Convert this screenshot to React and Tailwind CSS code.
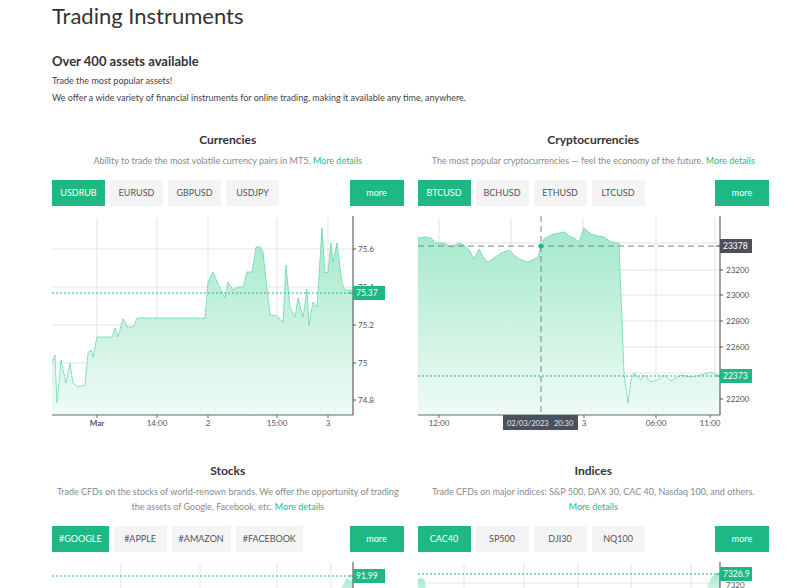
import React from 'react';

const GREEN = '#1db884';

// price series, page coords (converted to chart-local in the component)
const usdRub = [
  [52, 362], [55, 355], [57, 403], [61, 360], [66, 383], [70, 363], [73, 383], [78, 387],
  [85, 385], [88, 353], [91, 350], [93, 357], [97, 337], [112, 337], [115, 328], [118, 337],
  [123, 319], [127, 327], [133, 327], [137, 318], [205, 318], [208, 282], [213, 272],
  [220, 288], [225, 298], [228, 282], [233, 290], [238, 287], [243, 287], [247, 272],
  [252, 272], [256, 247], [260, 247], [263, 252], [270, 315], [277, 316], [283, 322],
  [286, 265], [290, 307], [295, 317], [298, 298], [303, 317], [307, 289], [309, 325],
  [313, 302], [317, 307], [322, 228], [325, 273], [328, 272], [331, 243], [333, 262],
  [337, 243], [342, 283], [345, 290], [353, 290],
];

const btcUsd = [
  [417, 238], [423, 237], [430, 238], [435, 243], [443, 243], [450, 247], [458, 243],
  [463, 245], [468, 250], [473, 259], [478, 249], [482, 257], [487, 262], [493, 258],
  [500, 253], [508, 250], [513, 255], [520, 260], [527, 262], [532, 260], [537, 257],
  [540, 246], [543, 239], [550, 235], [558, 233], [564, 232], [568, 236], [573, 238],
  [578, 242], [583, 228], [590, 234], [597, 236], [603, 237], [610, 242], [618, 243],
  [623, 373], [627, 403], [630, 380], [633, 373], [640, 380], [643, 375], [650, 382],
  [657, 380], [663, 375], [670, 381], [680, 375], [690, 377], [700, 375], [710, 372],
  [716, 375], [719, 376],
];

function toLocal(points, ox, oy) {
  return points.map(([x, y]) => [x - ox, y - oy]);
}

function linePath(points) {
  return points.map(([x, y], i) => `${i ? 'L' : 'M'}${x} ${y}`).join(' ');
}

function areaPath(points, bottom) {
  const first = points[0];
  const last = points[points.length - 1];
  return `${linePath(points)} L${last[0]} ${bottom} L${first[0]} ${bottom} Z`;
}

function Gradient({ id }) {
  return (
    <defs>
      <linearGradient id={id} x1="0" y1="0" x2="0" y2="1">
        <stop offset="0%" stopColor="#a3e9ca" />
        <stop offset="100%" stopColor="#effbf6" />
      </linearGradient>
    </defs>
  );
}

function PriceTag({ x, y, label, dark }) {
  return (
    <g>
      <line x1={x - 4} y1={y} x2={x} y2={y} stroke={dark ? '#4b505c' : GREEN} />
      <rect x={x} y={y - 7} width={32} height={14} fill={dark ? '#4b505c' : GREEN} />
      <text x={x + 3} y={y + 3} fontSize="8.5" fill="#fff">{label}</text>
    </g>
  );
}

const labelProps = { fontSize: '8', fill: '#555', fontFamily: 'Lato, sans-serif' };

function CurrencyChart() {
  const pts = toLocal(usdRub, 52, 214);
  const gx = [45, 105, 156, 225, 276];
  const gy = [[35, '75.6'], [73, '75.4'], [111, '75.2'], [149, '75'], [186, '74.8']];
  const xl = [[45, 'Mar', true], [105, '14:00'], [156, '2'], [225, '15:00'], [276, '3']];
  return (
    <svg width="351" height="220" className="block">
      <Gradient id="g1" />
      {gx.map((x) => <line key={x} x1={x} y1="4" x2={x} y2="201" stroke="#e3e3e3" />)}
      {gy.map(([y, l]) => (
        <g key={l}>
          <line x1="0" y1={y} x2="301" y2={y} stroke="#e3e3e3" />
          <line x1="301" y1={y} x2="304" y2={y} stroke="#555" />
          <text x="306" y={y + 3} {...labelProps}>{l}</text>
        </g>
      ))}
      <path d={areaPath(pts, 201)} fill="url(#g1)" />
      <path d={linePath(pts)} fill="none" stroke="#49cf98" strokeDasharray="1.2 0.8" />
      <line x1="0" y1="79" x2="301" y2="79" stroke={GREEN} strokeDasharray="2 2" />
      <line x1="301" y1="2" x2="301" y2="201" stroke="#444" />
      <line x1="0" y1="201" x2="301" y2="201" stroke="#666" />
      {xl.map(([x, l, b]) => (
        <g key={l}>
          <line x1={x} y1="201" x2={x} y2="204" stroke="#666" />
          <text x={x} y="212" textAnchor="middle" {...labelProps} fontWeight={b ? 700 : 400}>{l}</text>
        </g>
      ))}
      <PriceTag x={301} y={79} label="75.37" />
    </svg>
  );
}

function CryptoChart() {
  const pts = toLocal(btcUsd, 417, 214);
  const gx = [21, 93, 165, 238, 297];
  const gy = [29, 56, 81, 107, 133, 159, 185];
  const yl = [[56, '23200'], [81, '23000'], [107, '22800'], [133, '22600'], [185, '22200']];
  const xl = [[21, '12:00'], [166, '3'], [238, '06:00'], [292, '11:00']];
  return (
    <svg width="352" height="220" className="block">
      <Gradient id="g2" />
      {gx.map((x) => <line key={x} x1={x} y1="4" x2={x} y2="201" stroke="#e3e3e3" />)}
      {gy.map((y) => <line key={y} x1="0" y1={y} x2="302" y2={y} stroke="#e3e3e3" />)}
      {yl.map(([y, l]) => (
        <g key={l}>
          <line x1="302" y1={y} x2="305" y2={y} stroke="#555" />
          <text x="308" y={y + 3} {...labelProps}>{l}</text>
        </g>
      ))}
      <path d={areaPath(pts, 201)} fill="url(#g2)" />
      <path d={linePath(pts)} fill="none" stroke="#49cf98" strokeDasharray="1.2 0.8" />
      <line x1="0" y1="162" x2="302" y2="162" stroke={GREEN} strokeDasharray="2 2" />
      <line x1="0" y1="32" x2="302" y2="32" stroke="#7d828c" strokeDasharray="6 4" />
      <line x1="123" y1="2" x2="123" y2="201" stroke="#7d828c" strokeDasharray="6 4" />
      <circle cx="123" cy="32" r="2.5" fill={GREEN} />
      <line x1="302" y1="2" x2="302" y2="201" stroke="#444" />
      <line x1="0" y1="201" x2="302" y2="201" stroke="#666" />
      {xl.map(([x, l]) => (
        <g key={l}>
          <line x1={x} y1="201" x2={x} y2="204" stroke="#666" />
          <text x={x} y="212" textAnchor="middle" {...labelProps}>{l}</text>
        </g>
      ))}
      <rect x="85" y="201" width="75" height="15" fill="#4b505c" />
      <text x="89" y="211.5" fontSize="7.5" fill="#e8e8e8">02/03/2023</text>
      <text x="136" y="211.5" fontSize="7.5" fill="#e8e8e8">20:30</text>
      <PriceTag x={302} y={32} label="23378" dark />
      <PriceTag x={302} y={162} label="22373" />
    </svg>
  );
}

function StocksChart() {
  const pts = [[283, 40], [288, 30], [292, 23], [295, 18], [298, 21], [301, 19]];
  return (
    <svg width="351" height="40" className="block">
      <Gradient id="g3" />
      {[69, 148, 225, 279].map((x) => <line key={x} x1={x} y1="3" x2={x} y2="40" stroke="#e3e3e3" />)}
      <path d={areaPath(pts, 40)} fill="url(#g3)" />
      <line x1="0" y1="16" x2="301" y2="16" stroke={GREEN} strokeDasharray="2 2" />
      <line x1="301" y1="2" x2="301" y2="40" stroke="#444" />
      <PriceTag x={301} y={16} label="91.99" />
    </svg>
  );
}

function IndicesChart() {
  const left = [[0, 19], [4, 18], [7, 21], [9, 40]];
  const right = [[287, 40], [290, 24], [294, 17], [299, 14], [302, 13]];
  return (
    <svg width="352" height="40" className="block">
      <Gradient id="g4" />
      {[46, 106, 160, 213, 273].map((x) => <line key={x} x1={x} y1="3" x2={x} y2="40" stroke="#e3e3e3" />)}
      <line x1="0" y1="23" x2="302" y2="23" stroke="#e3e3e3" />
      <path d={areaPath(left, 40)} fill="url(#g4)" />
      <path d={areaPath(right, 40)} fill="url(#g4)" />
      <line x1="0" y1="14" x2="302" y2="14" stroke={GREEN} strokeDasharray="2 2" />
      <line x1="302" y1="2" x2="302" y2="40" stroke="#444" />
      <text x="308" y="28" {...labelProps}>7320</text>
      <PriceTag x={302} y={14} label="7326.9" />
    </svg>
  );
}

function Instrument({ title, children, tabs, chart }) {
  return (
    <div className="flex flex-col">
      <h3 className="text-center text-[12px] leading-[16px] font-bold text-[#333]">{title}</h3>
      <p className="mt-[5px] text-center text-[9px] leading-[15px] text-[#8a8a8a]">{children}</p>
      <div className="mt-[12px] flex gap-[5px]">
        {tabs.map((t, i) => (
          <button
            key={t}
            className={
              i === 0
                ? 'h-[26px] min-w-[53px] px-[7px] flex items-center justify-center text-[9px] bg-[#1db884] text-white'
                : 'h-[26px] min-w-[53px] px-[7px] flex items-center justify-center text-[9px] bg-[#f4f4f4] text-[#555]'
            }
          >
            {t}
          </button>
        ))}
        <button className="ml-auto h-[26px] w-[54px] flex items-center justify-center text-[9px] bg-[#1db884] text-white">
          more
        </button>
      </div>
      <div className="mt-[8px]">{chart}</div>
    </div>
  );
}

function More() {
  return <a className="text-[#1fb985]">More details</a>;
}

export default function App() {
  return (
    <div className="w-[800px] h-[588px] overflow-hidden bg-white font-['Lato',sans-serif] text-[#333]">
      <div className="pl-[52px] pr-[31px] pt-[3px]">
        <h1 className="text-[22px] leading-[26px] text-[#333]">Trading Instruments</h1>
        <h2 className="mt-[23px] text-[13px] leading-[18px] font-bold text-[#333]">Over 400 assets available</h2>
        <p className="mt-[2px] text-[9px] leading-[17px] text-[#444]">Trade the most popular assets!</p>
        <p className="text-[9px] leading-[17px] text-[#444]">
          We offer a wide variety of financial instruments for online trading, making it available any time, anywhere.
        </p>
        <div className="mt-[26px] grid grid-cols-2 gap-x-[14px] gap-y-[29px]">
          <Instrument title="Currencies" tabs={['USDRUB', 'EURUSD', 'GBPUSD', 'USDJPY']} chart={<CurrencyChart />}>
            Ability to trade the most volatile currency pairs in MT5. <More />
          </Instrument>
          <Instrument title="Cryptocurrencies" tabs={['BTCUSD', 'BCHUSD', 'ETHUSD', 'LTCUSD']} chart={<CryptoChart />}>
            The most popular cryptocurrencies — feel the economy of the future. <More />
          </Instrument>
          <Instrument title="Stocks" tabs={['#GOOGLE', '#APPLE', '#AMAZON', '#FACEBOOK']} chart={<StocksChart />}>
            Trade CFDs on the stocks of world-renown brands. We offer the opportunity of trading
            <br />
            the assets of Google, Facebook, etc. <More />
          </Instrument>
          <Instrument title="Indices" tabs={['CAC40', 'SP500', 'DJI30', 'NQ100']} chart={<IndicesChart />}>
            Trade CFDs on major indices: S&amp;P 500, DAX 30, CAC 40, Nasdaq 100, and others.
            <br />
            <More />
          </Instrument>
        </div>
      </div>
    </div>
  );
}
